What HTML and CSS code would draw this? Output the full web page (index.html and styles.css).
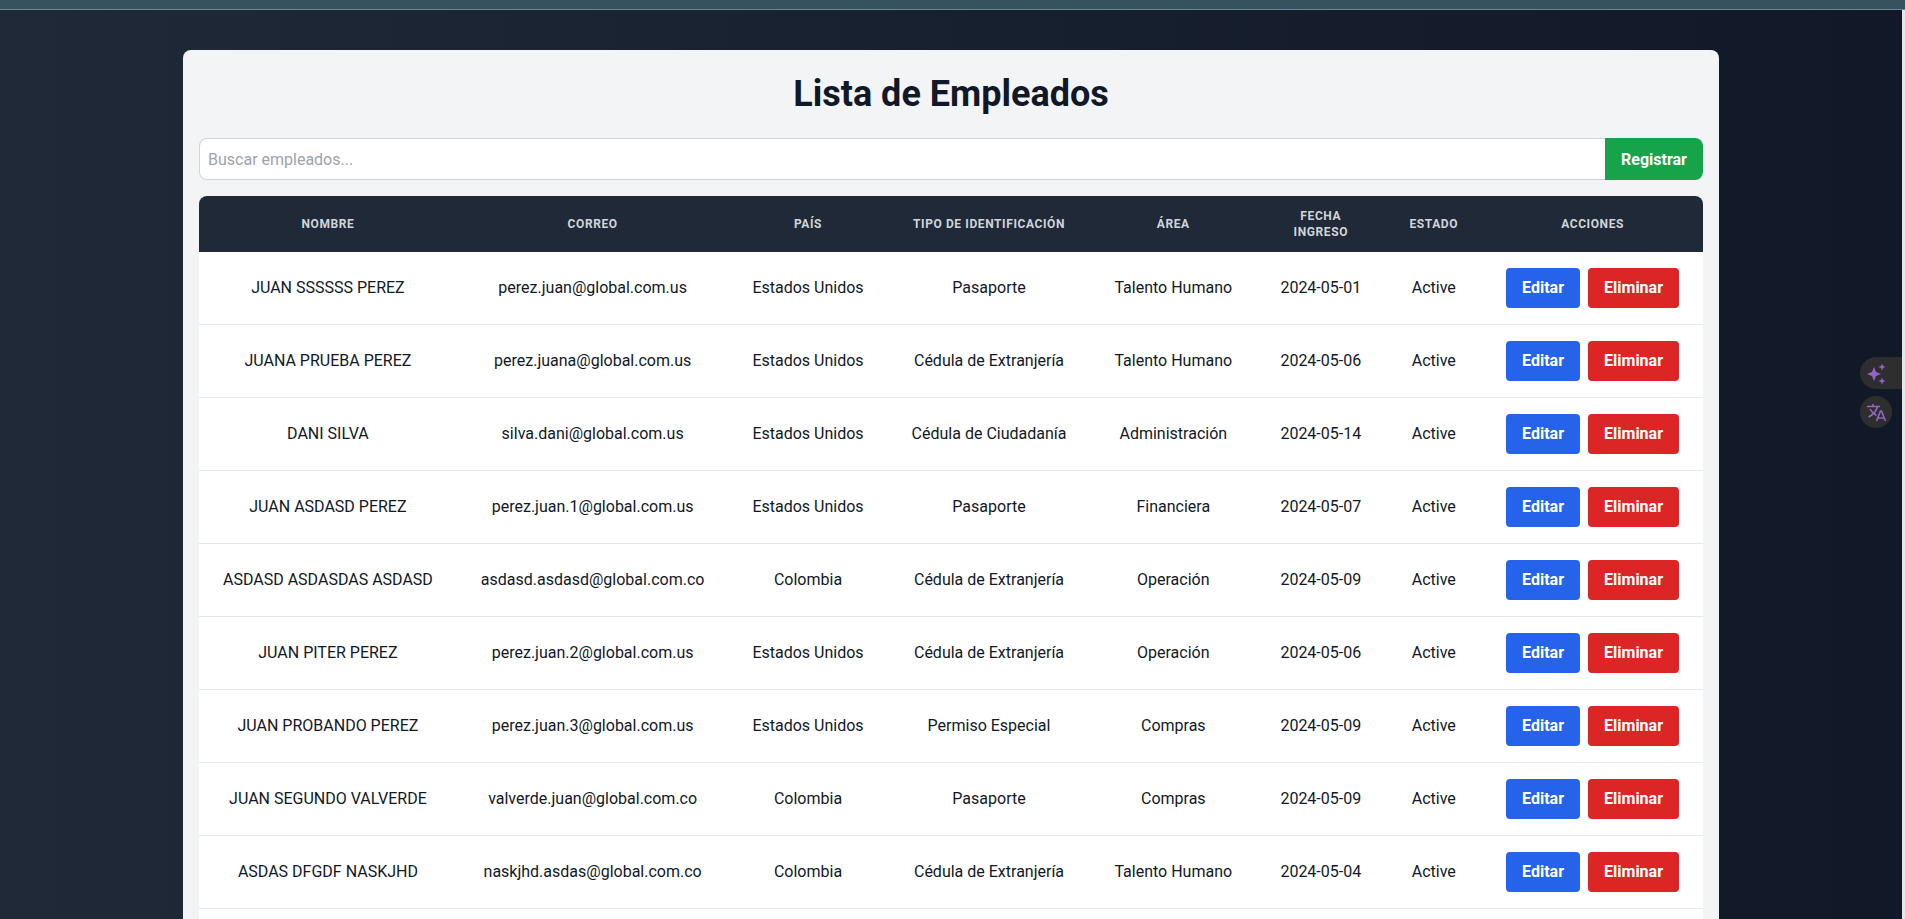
FILE: index.html
```html
<!DOCTYPE html>
<html lang="es">
<head>
    <meta charset="UTF-8">
    <meta name="viewport" content="width=device-width, initial-scale=1.0">
    <title>Lista de Empleados</title>
    <link rel="stylesheet" href="styles.css">
</head>
<body>
    <div class="top-bar"></div>
    <div class="page">
        <main class="main">
            <section class="card">
                <h1>Lista de Empleados</h1>
                <form class="search-row">
                    <input type="text" class="search-input" placeholder="Buscar empleados...">
                    <button type="button" class="btn-register">Registrar</button>
                </form>
                <table class="employees">
                    <thead>
                        <tr>
                            <th>Nombre</th>
                            <th>Correo</th>
                            <th>País</th>
                            <th>Tipo de Identificación</th>
                            <th>Área</th>
                            <th>Fecha Ingreso</th>
                            <th>Estado</th>
                            <th>Acciones</th>
                        </tr>
                    </thead>
                    <tbody>
                        <tr>
                            <td>JUAN SSSSSS PEREZ</td><td>perez.juan@global.com.us</td><td>Estados Unidos</td><td>Pasaporte</td><td>Talento Humano</td><td>2024-05-01</td><td>Active</td>
                            <td><div class="actions"><button class="btn-edit">Editar</button><button class="btn-delete">Eliminar</button></div></td>
                        </tr>
                        <tr>
                            <td>JUANA PRUEBA PEREZ</td><td>perez.juana@global.com.us</td><td>Estados Unidos</td><td>Cédula de Extranjería</td><td>Talento Humano</td><td>2024-05-06</td><td>Active</td>
                            <td><div class="actions"><button class="btn-edit">Editar</button><button class="btn-delete">Eliminar</button></div></td>
                        </tr>
                        <tr>
                            <td>DANI SILVA</td><td>silva.dani@global.com.us</td><td>Estados Unidos</td><td>Cédula de Ciudadanía</td><td>Administración</td><td>2024-05-14</td><td>Active</td>
                            <td><div class="actions"><button class="btn-edit">Editar</button><button class="btn-delete">Eliminar</button></div></td>
                        </tr>
                        <tr>
                            <td>JUAN ASDASD PEREZ</td><td>perez.juan.1@global.com.us</td><td>Estados Unidos</td><td>Pasaporte</td><td>Financiera</td><td>2024-05-07</td><td>Active</td>
                            <td><div class="actions"><button class="btn-edit">Editar</button><button class="btn-delete">Eliminar</button></div></td>
                        </tr>
                        <tr>
                            <td>ASDASD ASDASDAS ASDASD</td><td>asdasd.asdasd@global.com.co</td><td>Colombia</td><td>Cédula de Extranjería</td><td>Operación</td><td>2024-05-09</td><td>Active</td>
                            <td><div class="actions"><button class="btn-edit">Editar</button><button class="btn-delete">Eliminar</button></div></td>
                        </tr>
                        <tr>
                            <td>JUAN PITER PEREZ</td><td>perez.juan.2@global.com.us</td><td>Estados Unidos</td><td>Cédula de Extranjería</td><td>Operación</td><td>2024-05-06</td><td>Active</td>
                            <td><div class="actions"><button class="btn-edit">Editar</button><button class="btn-delete">Eliminar</button></div></td>
                        </tr>
                        <tr>
                            <td>JUAN PROBANDO PEREZ</td><td>perez.juan.3@global.com.us</td><td>Estados Unidos</td><td>Permiso Especial</td><td>Compras</td><td>2024-05-09</td><td>Active</td>
                            <td><div class="actions"><button class="btn-edit">Editar</button><button class="btn-delete">Eliminar</button></div></td>
                        </tr>
                        <tr>
                            <td>JUAN SEGUNDO VALVERDE</td><td>valverde.juan@global.com.co</td><td>Colombia</td><td>Pasaporte</td><td>Compras</td><td>2024-05-09</td><td>Active</td>
                            <td><div class="actions"><button class="btn-edit">Editar</button><button class="btn-delete">Eliminar</button></div></td>
                        </tr>
                        <tr>
                            <td>ASDAS DFGDF NASKJHD</td><td>naskjhd.asdas@global.com.co</td><td>Colombia</td><td>Cédula de Extranjería</td><td>Talento Humano</td><td>2024-05-04</td><td>Active</td>
                            <td><div class="actions"><button class="btn-edit">Editar</button><button class="btn-delete">Eliminar</button></div></td>
                        </tr>
                        <tr class="row-cut">
                            <td colspan="8"></td>
                        </tr>
                    </tbody>
                </table>
            </section>
        </main>
        <div class="scroll-strip"></div>
    </div>

    <div class="side-tools">
        <div class="tool tool-wide">
            <svg viewBox="0 0 24 24" width="24" height="24" fill="#9166c8">
                <path d="M10 6l2 5 5 2-5 2-2 5-2-5-5-2 5-2z"/>
                <path d="M18 2.500l1 2.500 2.500 1-2.500 1-1 2.500-1-2.500-2.500-1 2.500-1z"/>
                <path d="M18 16.500l1 2.500 2.500 1-2.500 1-1 2.500-1-2.500-2.500-1 2.500-1z"/>
            </svg>
        </div>
        <div class="tool">
            <svg viewBox="0 0 24 24" width="24" height="24" fill="none" stroke="#9166c8" stroke-width="1.600">
                <path d="M3 6.500h13M9 4v2.500M13.500 6.500c-1 4-4 8-9 10.500M6 9c1.500 3 4 5 6.500 6.500"/>
                <path d="M12.500 21l4-10h1l4 10M14 18h6"/>
            </svg>
        </div>
    </div>
</body>
</html>
```

FILE: styles.css
```css
html,
body {
    height: 919px;
    overflow: hidden;
}

body {
    margin: 0;
    font-family: Roboto, "Liberation Sans", sans-serif;
    color: #111827;
    background-color: #111827;
    display: flex;
    flex-direction: column;
}

.top-bar {
    height: 9px;
    flex-shrink: 0;
    background-color: #35525e;
    border-bottom: 1px solid #6e8790;
}

.page {
    flex: 1;
    min-height: 0;
    display: flex;
}

.main {
    flex: 1;
    min-width: 0;
    padding-top: 40px;
    background: linear-gradient(to right, #1f2937, #111827);
}

.scroll-strip {
    width: 3px;
    background-color: #e5e7eb;
}

.card {
    max-width: 1504px;
    margin: 0 auto;
    padding: 24px 16px 16px;
    background-color: #f3f4f6;
    border-radius: 8px;
}

h1 {
    margin: 0 0 24px;
    font-size: 36px;
    line-height: 40px;
    font-weight: 700;
    text-align: center;
    color: #111827;
}

.search-row {
    display: flex;
    height: 42px;
    margin-bottom: 16px;
}

.search-input {
    flex: 1;
    min-width: 0;
    padding: 8px;
    font: inherit;
    font-size: 16px;
    background-color: white;
    border: 1px solid #d1d5db;
    border-right: none;
    border-radius: 8px 0 0 8px;
    outline: none;
}

.search-input::placeholder {
    color: #9ca3af;
}

.btn-register {
    width: 98px;
    border: none;
    border-radius: 0 8px 8px 0;
    font: inherit;
    font-weight: 700;
    color: white;
    background-color: #16a34a;
}

.employees {
    width: 100%;
    border-collapse: separate;
    border-spacing: 0;
    background-color: white;
    border-radius: 8px 8px 0 0;
    overflow: hidden;
}

.employees th {
    padding: 12px 24px;
    font-size: 12px;
    line-height: 16px;
    font-weight: 700;
    letter-spacing: 0.6px;
    text-transform: uppercase;
    color: #d1d5db;
    background-color: #1f2937;
}

.employees td {
    padding: 16px 24px;
    font-size: 16px;
    line-height: 24px;
    text-align: center;
    white-space: nowrap;
    border-bottom: 1px solid #e5e7eb;
}

.row-cut td {
    height: 40px;
}

.actions {
    display: flex;
    gap: 8px;
}

.actions button {
    height: 40px;
    padding: 0 16px;
    border: none;
    border-radius: 4px;
    font: inherit;
    font-weight: 700;
    color: white;
}

.btn-edit {
    background-color: #2563eb;
}

.btn-delete {
    background-color: #dc2626;
}

/* browser extension buttons floating on the right edge */
.side-tools {
    position: fixed;
    top: 357px;
    right: 3px;
    display: flex;
    flex-direction: column;
    align-items: flex-end;
    gap: 7px;
}

.tool {
    width: 32px;
    height: 32px;
    display: flex;
    align-items: center;
    justify-content: center;
    margin-right: 10px;
    background-color: #2e2e2e;
    border-radius: 16px;
}

.tool-wide {
    width: 42px;
    justify-content: flex-start;
    padding-left: 4px;
    box-sizing: border-box;
    margin-right: 0;
    border-radius: 16px 0 0 16px;
}
```
